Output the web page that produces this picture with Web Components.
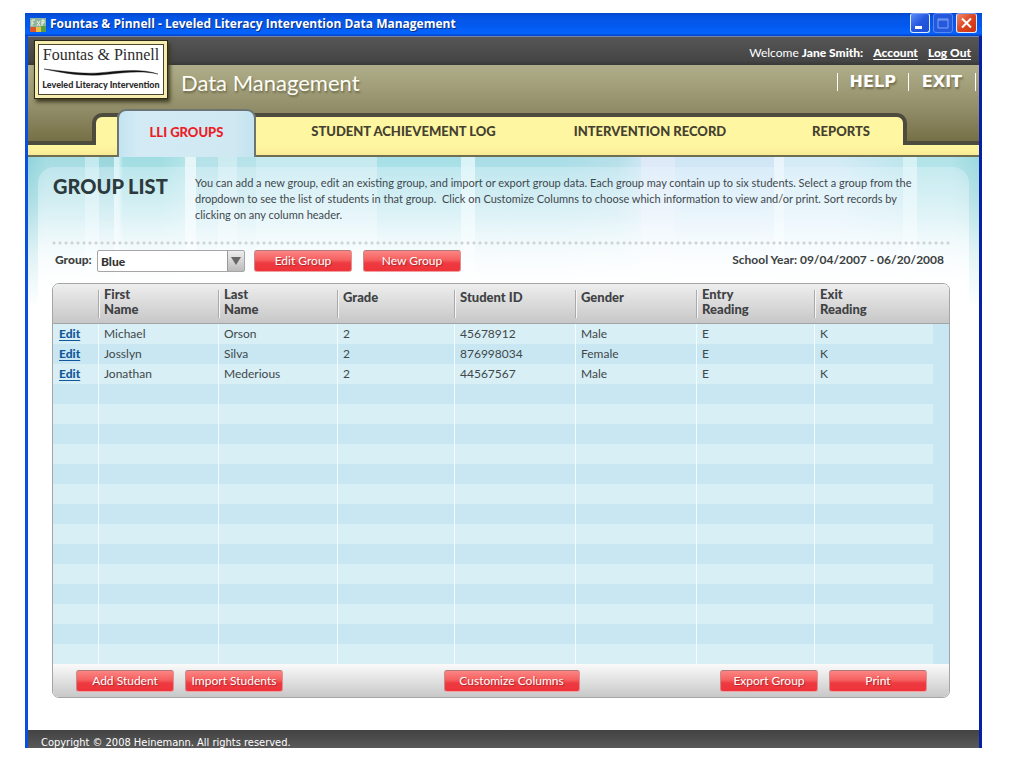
<!DOCTYPE html>
<html lang="en">
<head>
<meta charset="utf-8">
<title>Leveled Literacy Intervention Data Management</title>
<style>
body { margin: 0; padding: 13px 42px 20px 25px; background: #fff; font-family: Lato, "Liberation Sans", sans-serif; font-size: 12px; color: #3b3f42; }
</style>
</head>
<body>
<app-window>
  <title-bar slot="title">Fountas &amp; Pinnell - Leveled Literacy Intervention Data Management</title-bar>
  <brand-header user="Jane Smith">Data Management</brand-header>
  <tab-nav></tab-nav>
  <group-page></group-page>
  <app-footer>Copyright © 2008 Heinemann. All rights reserved.</app-footer>
</app-window>
<script>
class Base extends HTMLElement {
  constructor() {
    super();
    this.attachShadow({ mode: 'open' }).innerHTML =
      '<style>*{box-sizing:border-box}</style>' + this.view();
  }
}

customElements.define('app-window', class extends Base {
  view() { return `<style>
    :host { display: block; }
    .body { border: solid; border-width: 0 3px; border-color: #0a4fe0 #0420a4 #0420a4 #0a4fe0; background: #fff; }
    </style>
    <slot name="title"></slot><div class="body"><slot></slot></div>`; }
});

customElements.define('title-bar', class extends Base {
  view() { return `<style>
    :host { display: flex; align-items: center; height: 23px; padding: 0 5px; gap: 4px;
      background: linear-gradient(#0348cc, #0455e4 20%, #0359ee 55%, #0464ff 88%, #0340c0); }
    h1 { flex: 1; margin: 0; padding-bottom: 2px; font: bold 12px "Open Sans", sans-serif; color: #fff; text-shadow: 1px 1px #0a2f80; white-space: nowrap; }
    .btns { display: flex; gap: 3px; align-self: flex-start; }
    button { width: 20px; height: 20px; padding: 0; border: 1px solid #dfe9ff; border-top-color: #7aa0f0; border-radius: 3px; background: linear-gradient(135deg, #5c8cf8, #2357dd 50%, #1c4fd6); }
    button.max { border-color: #5b86ee; background: #2459dd; }
    button.close { width: 21px; background: linear-gradient(135deg, #f08a6c, #dc4420 50%, #c8350f); }
    svg { display: block; }
    </style>
    <svg width="16" height="14" viewBox="0 0 16 14" aria-hidden="true">
      <rect width="16" height="14" fill="#8fb39b"/><rect y="9" width="6" height="5" fill="#d8582c"/><rect x="6" y="9" width="5" height="5" fill="#e8c04a"/><rect x="11" y="8" width="5" height="6" fill="#58a048"/>
      <path d="M2 8V2h3M2 5h2M7 3l3 5M10 3l-3 5M12 8V2h2v3h-2" stroke="#eef6e8" fill="none"/>
    </svg>
    <h1><slot></slot></h1>
    <div class="btns">
      <button aria-label="Minimize"><svg width="18" height="18"><rect x="4" y="12" width="7" height="3" fill="#fff"/></svg></button>
      <button class="max" aria-label="Maximize"><svg width="18" height="18"><path d="M4 5h10v9H4z M4 6h10" fill="none" stroke="#7fa4f4"/></svg></button>
      <button class="close" aria-label="Close"><svg width="19" height="18"><path d="M5 4.500l9 9M14 4.500l-9 9" stroke="#fff" stroke-width="2"/></svg></button>
    </div>`; }
});

customElements.define('brand-header', class extends Base {
  view() { return `<style>
    :host { display: block; position: relative; color: #fff; }
    .user { display: flex; justify-content: flex-end; align-items: center; gap: 10px; height: 29px; padding: 4px 8px 0 0;
      background: linear-gradient(#565656, #454545 85%, #383838); border-top: 1px solid #6f87b0; font-size: 12px; line-height: 16px; }
    .user a { color: #fff; font-weight: 900; text-underline-offset: 2px; }
    b { font-weight: 900; }
    .main { display: flex; align-items: center; height: 44px; padding: 0 3px 0 153px; background: linear-gradient(#b0ae8a, #918d68); }
    .main > span { flex: 1; padding-bottom: 8px; font-size: 22px; line-height: 28px; text-shadow: 1px 2px 2px #6d6a4c; color: #fdfdf6; }
    nav { display: flex; padding-bottom: 10px; }
    nav a { padding: 0 12px; border-left: 1px solid #fff; font: bold 16px/18px "DejaVu Sans", sans-serif; color: #fff; text-decoration: none; text-shadow: 1px 2px 2px #6d6a4c; }
    nav a:last-child { padding: 0 13px; border-right: 1px solid #fff; }
    .logo { position: absolute; left: 6px; top: 4px; width: 134px; height: 59px; padding: 3px; background: #f5eeb0; border: 1px solid #2d2a1a; box-shadow: 2px 3px 4px #3b3820; }
    .plate { display: flex; flex-direction: column; align-items: center; justify-content: space-between; height: 100%; border: 1px solid #4a4630; background: #fff; color: #2c2c2c; padding: 0 0 4px; white-space: nowrap; }
    .name { font: 16px/20px "Liberation Serif", serif; }
    .sub { font: 900 9px/11px Lato, sans-serif; }
    svg { display: block; }
    </style>
    <div class="user"><span>Welcome <b></b></span><a href="#account">Account</a><a href="#logout">Log Out</a></div>
    <div class="main"><span><slot></slot></span><nav><a href="#help">HELP</a><a href="#exit">EXIT</a></nav></div>
    <div class="logo"><div class="plate"><span class="name">Fountas &amp; Pinnell</span>
      <svg width="114" height="8" viewBox="0 0 114 8" aria-hidden="true"><path d="M0 1C20 3 34 6 54 5C76 3 96 0 114 6C96 2 78 5 56 7C34 8 20 5 0 1Z" fill="#111" stroke="#111" stroke-width=".4"/></svg>
      <span class="sub">Leveled Literacy Intervention</span></div></div>`; }
  connectedCallback() { this.shadowRoot.querySelector('b').textContent = this.getAttribute('user') + ':'; }
});

customElements.define('tab-nav', class extends Base {
  view() { return `<style>
    :host { display: block; background: linear-gradient(#918d68, #736c42 36px); padding-top: 4px; }
    .row { display: flex; align-items: flex-end; height: 32px; }
    .edge { height: 4px; background: #4d4a3e; }
    .left { width: 64px; } .right { width: 72px; }
    ul { position: relative; z-index: 1; flex: 1; display: flex; height: 32px; margin: 0; padding: 0 0 0 21px; list-style: none; background: #fff6a2; border: 4px solid #4d4a3e; border-bottom: 0; border-radius: 10px 10px 0 0; }
    li { display: flex; align-items: center; justify-content: center; }
    li.on { width: 139px; flex: none; margin: -8px 0 -12px; padding-bottom: 4px; border: 2px solid #6d7474; border-bottom: 0; border-radius: 9px 9px 0 0; background: linear-gradient(90deg, #c3e4f0, #d4ebf5 15%, #cfe8f2 85%, #c3e4f0); }
    .b { flex: 3 3 295px; } .c { flex: 2 2 198px; } .d { flex: 2 2 154px; padding-left: 30px; }
    a { font: 900 13px/20px Lato, sans-serif; color: #44412f; text-decoration: none; white-space: nowrap; }
    .on a { color: #ee1c25; }
    .strip { height: 12px; background: linear-gradient(#fff6a2, #f8eb94); border-bottom: 2px solid #6f6e50; }
    </style>
    <div class="row"><div class="edge left"></div>
    <ul><li class="on"><a href="#groups">LLI GROUPS</a></li><li class="b"><a href="#log">STUDENT ACHIEVEMENT LOG</a></li><li class="c"><a href="#record">INTERVENTION RECORD</a></li><li class="d"><a href="#reports">REPORTS</a></li></ul>
    <div class="edge right"></div></div><div class="strip"></div>`; }
});

customElements.define('red-button', class extends Base {
  view() { return `<style>
    :host { display: block; width: 98px; }
    button { display: block; width: 100%; height: 22px; padding: 0; border: 1px solid #c98a8a; border-color: #b07878 #e09090 #f0a0a0 #c98a8a; border-radius: 3px; background: linear-gradient(#fb8583, #f5605f 45%, #ee3a41 60%, #ee3339); color: #fff; font: 12px/18px Lato, sans-serif; text-shadow: 1px 1px 1px #a82a2e; white-space: nowrap; }
    </style><button><slot></slot></button>`; }
});

customElements.define('group-page', class extends Base {
  view() { return `<style>
    :host { display: block; padding: 10px 10px 32px; position: relative; z-index: 0; }
    .sky { position: absolute; z-index: -1; inset: 0 0 auto; height: 150px;
      background: linear-gradient(90deg, #8fd3da 0, #a4dce2 2% 6%, #c2e9ee 6% 7.500%, #9ad6dd 7.500% 9%, #d4f1f4 9% 9.500%, #a0dde2 10% 14%, #b2e3e8 16.500%, #e4f5f8 16.500% 17.700%, #b4e1e8 17.700% 20%, #cbebf1 20% 22%, #b5e2e9 22% 24%, #c4e9ef 24% 36.700%, #a6dfe7 36.700% 45.500%, #d8f3f7 45.500% 47%, #a8dde6 47% 56%, #b5dfe9 62%, #cbe6f3 64.500%, #dce9f7 64.500% 68%, #cfe6f6 68% 78.400%, #e8f4fb 78.400% 79.500%, #d3ebf6 79.500% 85%, #bde5ec 92%, #d5f1f4 92% 93.500%, #b0e3e8 93.500% 97%, #9cd8df);
      mask-image: linear-gradient(#000, rgba(0,0,0,.75) 30%, rgba(0,0,0,.3) 65%, transparent); }
    .card { border-radius: 16px 16px 0 0; background: linear-gradient(rgba(235,248,255,.3), rgba(244,251,255,.5) 50px, #fff 120px); padding: 8px 19px 0 14px; }
    .intro { display: flex; padding: 0 0 12px 1px; }
    h2 { width: 142px; flex: none; margin: 0; font-size: 20px; line-height: 22px; font-weight: 900; color: #2d3a3d; }
    p { margin: 0; line-height: 16px; font-size: 11px; color: #3f484d; white-space: nowrap; }
    .dots { height: 4px; margin-top: 6px; background: radial-gradient(circle at 2px 2px, #ced3d5 1px, transparent 2px) 0 0 / 6px 4px; }
    .bar { display: flex; align-items: center; margin-top: 5px; padding: 0 6px 0 3px; height: 22px; }
    label, .year { font-weight: 900; color: #3c3f41; padding-bottom: 4px; }
    label { width: 42px; }
    .pick { position: relative; width: 148px; }
    select { appearance: none; display: block; width: 100%; height: 22px; margin: 0; padding: 0 20px 0 3px; border: 1px solid #a6a6a6; border-radius: 2px; background: linear-gradient(#eee, #bbb) right / 17px 100% no-repeat #fff; font: 900 12px Lato, sans-serif; color: #333; }
    .pick svg { position: absolute; right: 0; top: 0; pointer-events: none; }
    .bar red-button { margin-left: 9px; } .bar red-button + red-button { margin-left: 11px; }
    .year { margin-left: auto; font-weight: bold; }
    student-table { margin-top: 11px; display: block; }
    </style>
    <div class="sky"></div>
    <div class="card">
      <div class="intro"><h2>GROUP LIST</h2><p>You can add a new group, edit an existing group, and import or export group data. Each group may contain up to six students. Select a group from the<br>dropdown to see the list of students in that group. &nbsp;Click on Customize Columns to choose which information to view and/or print. Sort records by<br>clicking on any column header.</p></div>
      <div class="dots"></div>
      <div class="bar"><label for="g">Group:</label>
        <div class="pick"><select id="g"><option>Blue</option></select><svg width="18" height="22" aria-hidden="true"><path d="M.500 1v20" stroke="#999"/><path d="M4 7h10l-5 8z" fill="#666"/></svg></div>
        <red-button>Edit Group</red-button><red-button>New Group</red-button>
        <span class="year">School Year: 09/04/2007 - 06/20/2008</span></div>
      <student-table></student-table>
    </div>`; }
});

customElements.define('student-table', class extends Base {
  view() {
    const data = [['Michael','Orson','2','45678912','Male','E','K'],['Josslyn','Silva','2','876998034','Female','E','K'],['Jonathan','Mederious','2','44567567','Male','E','K']];
    const heads = ['First<br>Name','Last<br>Name','Grade','Student ID','Gender','Entry<br>Reading','Exit<br>Reading'];
    let rows = '';
    for (let i = 0; i < 17; i++) {
      const r = data[i];
      rows += '<tr><td>' + (r ? '<a href="#edit">Edit</a>' : '') + '</td>' + heads.map((h, c) => '<td>' + (r ? r[c] : '') + '</td>').join('') + '<td></td></tr>';
    }
    return `<style>
    .panel { border: 1px solid #a3a5a6; border-radius: 7px; overflow: hidden; }
    table { width: 100%; table-layout: fixed; border-collapse: separate; border-spacing: 0; }
    thead { background: linear-gradient(#eee, #c6c6c6); }
    th { height: 40px; padding: 3px 0 0 6px; text-align: left; vertical-align: top; font-size: 13px; font-weight: 900; line-height: 15px; color: #3f4244; border-bottom: 1px solid #a3a5a6; }
    th:nth-child(n+2):nth-child(-n+8) { background: linear-gradient(90deg, #aaa 1px, #f6f6f6 1px) 0 6px / 2px 28px no-repeat; }
    th.one { padding-top: 6px; }
    td { height: 20px; padding: 0 0 0 5px; line-height: 20px; border-left: 1px solid #f2fbfd; color: #41474a; }
    td:first-child, td:last-child { border-left: 0; }
    td:first-child { padding-left: 6px; }
    tbody tr { background: #c9e7f2; }
    tbody tr:nth-child(odd) { background: #d7eff5; }
    tbody td:last-child { background: #c9e7f2; }
    a { font-weight: 900; color: #12589c; text-underline-offset: 2px; }
    .foot { display: flex; align-items: center; height: 33px; padding: 0 22px 0 23px; background: linear-gradient(#fafafa, #c8c8c8); }
    .grp { display: flex; gap: 11px; }
    .wide { width: 136px; }
    .s1 { flex: 8; } .s2 { flex: 7; }
    </style>
    <div class="panel"><table>
      <colgroup>${[45,120,119,117,121,121,118,119,16].map(w => `<col style="width:${w}px">`).join('')}</colgroup>
      <thead><tr><th aria-label="Actions"></th>${heads.map(h => `<th${h.includes('<') ? '' : ' class="one"'}>${h}</th>`).join('')}<th></th></tr></thead>
      <tbody>${rows}</tbody></table>
      <div class="foot"><div class="grp"><red-button>Add Student</red-button><red-button>Import Students</red-button></div><div class="s1"></div><red-button class="wide">Customize Columns</red-button><div class="s2"></div><div class="grp"><red-button>Export Group</red-button><red-button>Print</red-button></div></div>
    </div>`;
  }
});

customElements.define('app-footer', class extends Base {
  view() { return `<style>
    :host { display: block; height: 18px; overflow: hidden; padding: 5px 13px 0; box-sizing: border-box; background: linear-gradient(#424242, #595959); color: #fff; font: 11px/16px "DejaVu Sans Condensed", "Noto Sans", sans-serif; }
    </style><slot></slot>`; }
});
</script>
</body>
</html>
